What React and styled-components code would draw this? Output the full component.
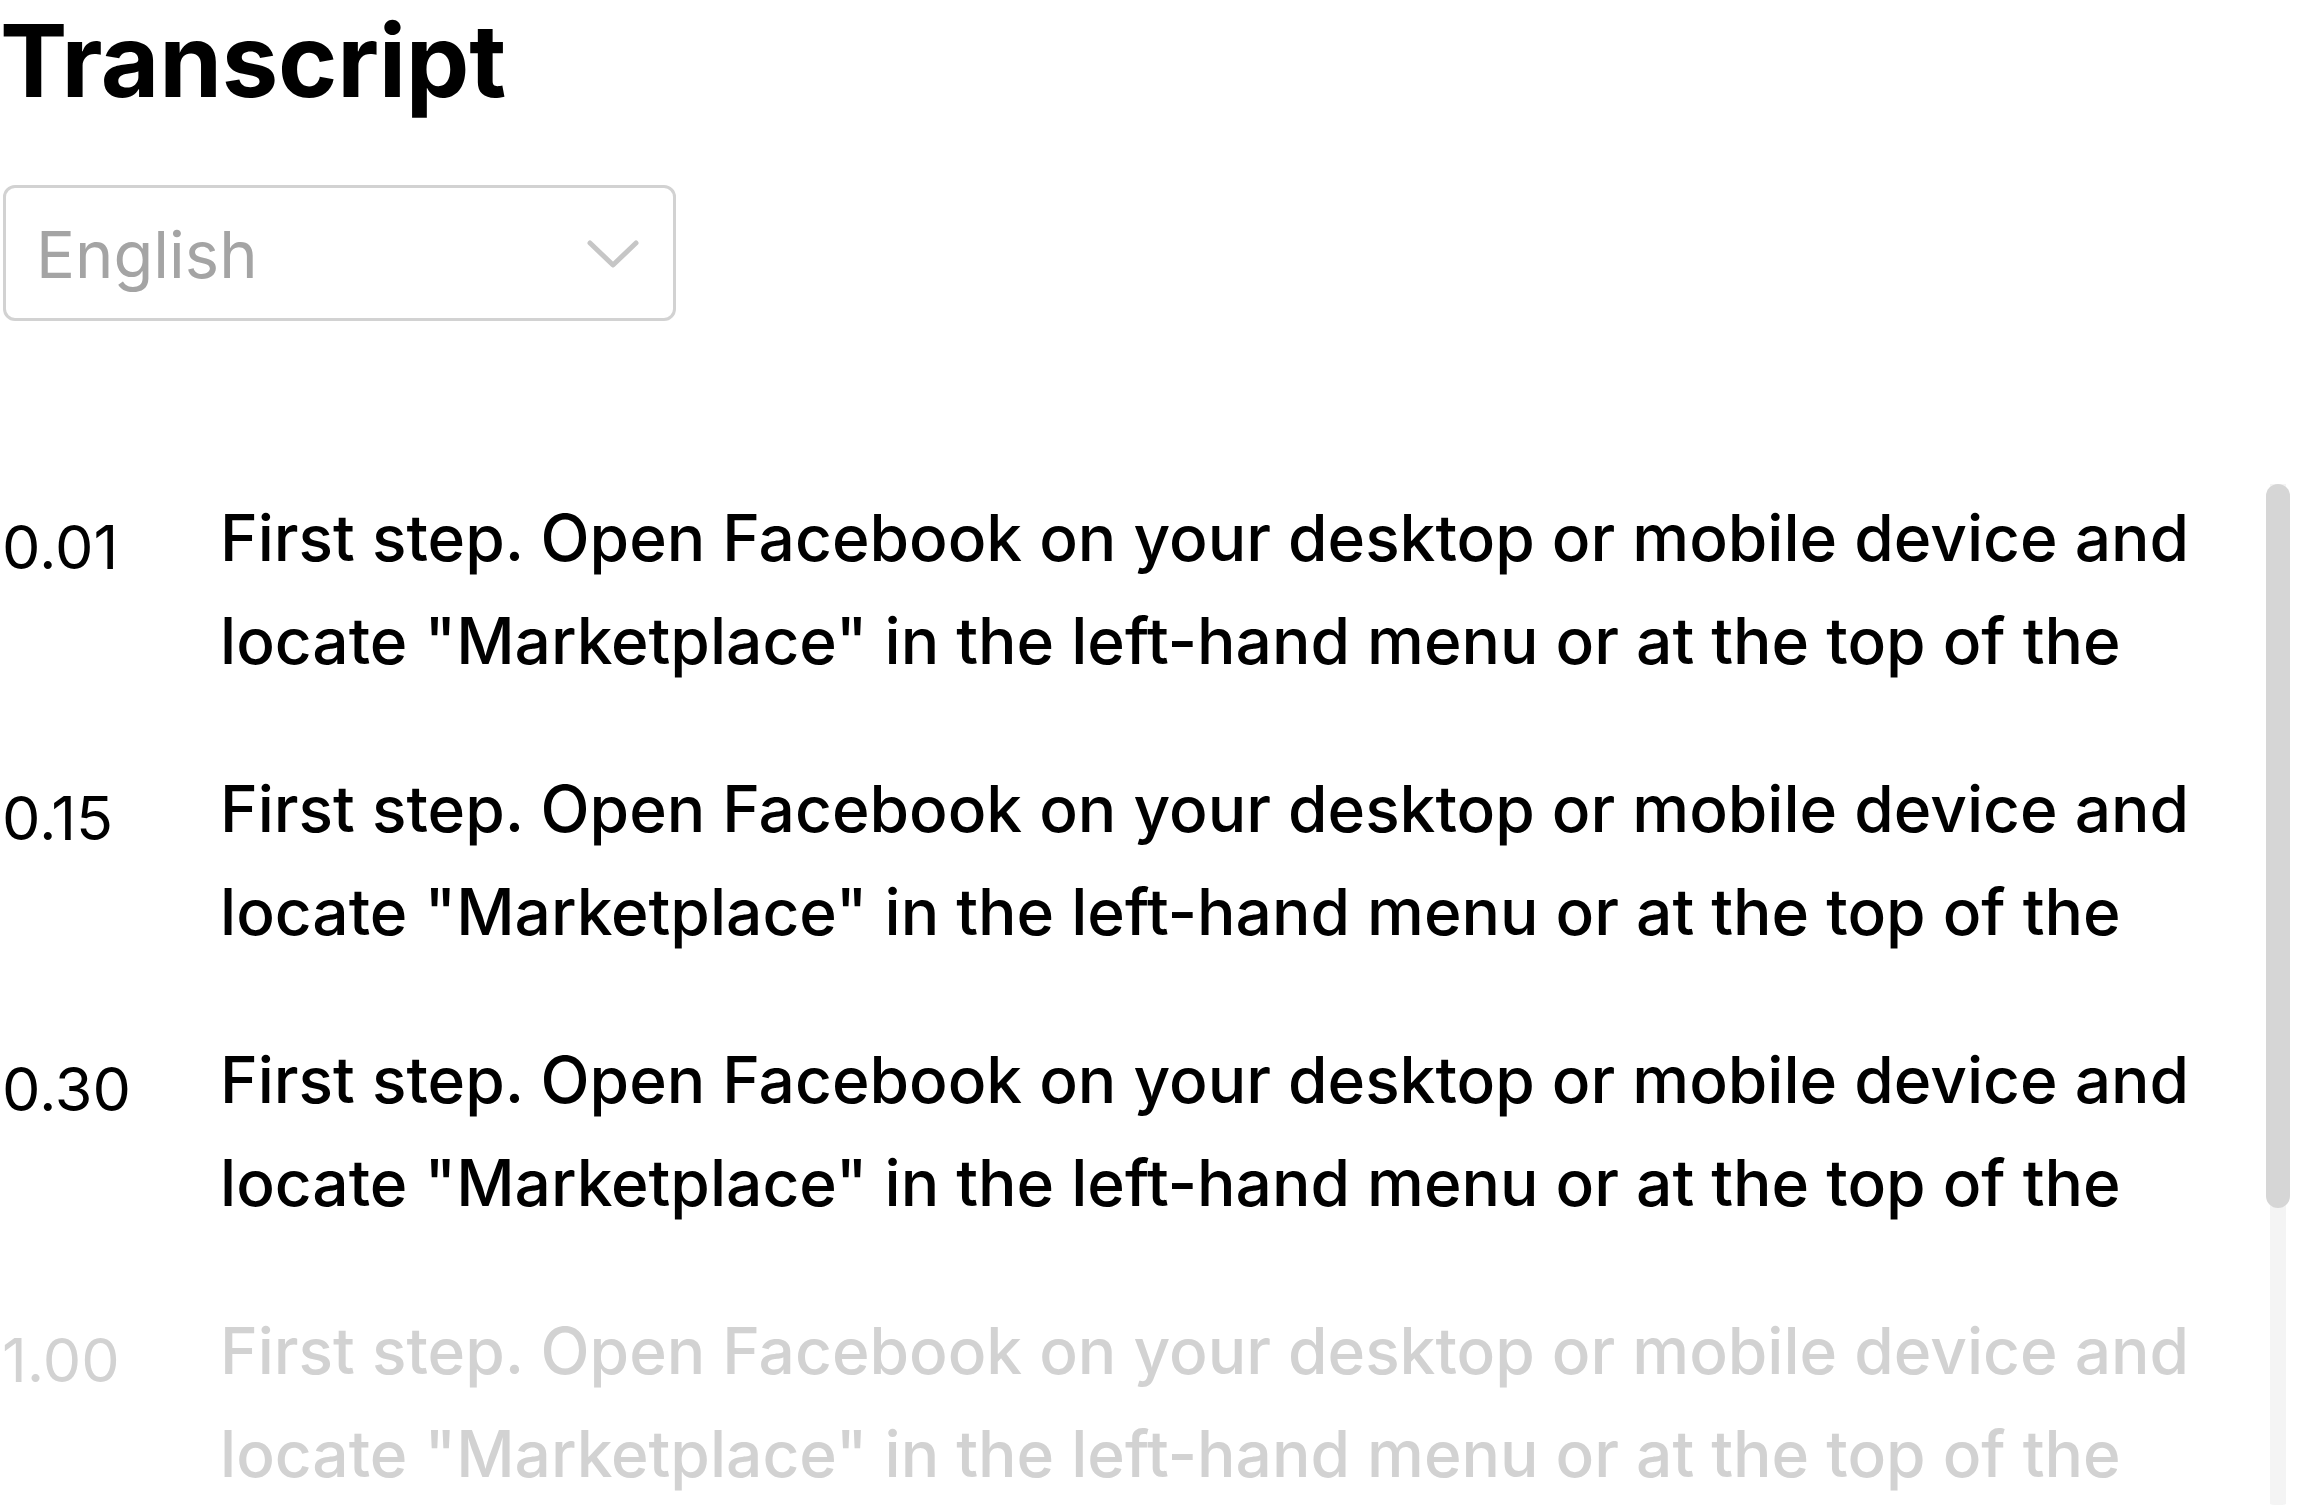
import React from 'react';
import styled, { createGlobalStyle } from 'styled-components';

const GlobalStyle = createGlobalStyle`
    html, body {
        margin: 0;
        padding: 0;
        background: #ffffff;
        font-family: Inter, "Noto Sans", sans-serif;
    }
`

const rows = [
    { time: '0.01', text: 'First step. Open Facebook on your desktop or mobile device and locate "Marketplace" in the left-hand menu or at the top of the' },
    { time: '0.15', text: 'First step. Open Facebook on your desktop or mobile device and locate "Marketplace" in the left-hand menu or at the top of the' },
    { time: '0.30', text: 'First step. Open Facebook on your desktop or mobile device and locate "Marketplace" in the left-hand menu or at the top of the' },
    { time: '1.00', text: 'First step. Open Facebook on your desktop or mobile device and locate "Marketplace" in the left-hand menu or at the top of the', upcoming: true },
    { time: '1.15', text: 'First step. Open Facebook on your desktop or mobile device and locate "Marketplace" in the left-hand menu or at the top of the', upcoming: true },
]

const Chevron = () => (
    <svg width="52" height="28" viewBox="0 0 52 28" fill="none">
        <polyline points="3,3 26,25 49,3" stroke="#c6c6c6" strokeWidth="5" strokeLinecap="round" strokeLinejoin="round" />
    </svg>
)

const App = () => {
    return (
        <Page>
            <GlobalStyle />
            <Title>Transcript</Title>
            <Select>
                <SelectValue>English</SelectValue>
                <Chevron />
            </Select>
            <ScrollArea>
                <List>
                    {rows.map((row, i) => (
                        <Row key={i} $upcoming={row.upcoming}>
                            <Time>{row.time}</Time>
                            <Line>{row.text}</Line>
                        </Row>
                    ))}
                </List>
                <Track>
                    <Thumb />
                </Track>
            </ScrollArea>
        </Page>
    );
};

export default App;

const Page = styled.main`
    width: 100%;
    height: 100vh;
    box-sizing: border-box;
    padding: 0 11px 3px 0;
    display: flex;
    flex-direction: column;
    overflow: hidden;
`

const Title = styled.h1`
    margin: 0;
    font-family: Inter, sans-serif;
    font-size: 101px;
    font-weight: 700;
    line-height: 1.2;
    letter-spacing: -0.3px;
    color: #000000;
`

const Select = styled.div`
    margin-top: 64px;
    margin-left: 3px;
    width: 673px;
    height: 136px;
    box-sizing: border-box;
    border: 3px solid #d2d2d2;
    border-radius: 12px;
    display: flex;
    align-items: center;
    justify-content: space-between;
    padding: 2px 34px 0 30px;
`

const SelectValue = styled.span`
    font-family: Inter, sans-serif;
    font-size: 65px;
    font-weight: 400;
    color: #a4a4a4;
`

const ScrollArea = styled.div`
    margin-top: 163px;
    flex: 1;
    min-height: 0;
    display: flex;
    align-items: stretch;
`

const List = styled.section`
    flex: 1;
    overflow: hidden;
    display: flex;
    flex-direction: column;
    gap: 65px;
    padding-top: 2px;
`

const Track = styled.div`
    width: 24px;
    flex-shrink: 0;
    display: flex;
    flex-direction: column;
    align-items: center;
    background: linear-gradient(to right, transparent 4px, #f4f4f4 4px, #f4f4f4 20px, transparent 20px);
    border-radius: 0 0 8px 8px;
`

const Thumb = styled.div`
    width: 24px;
    height: 724px;
    background: #d6d6d6;
    border-radius: 12px;
`

const Row = styled.div`
    display: flex;
    align-items: flex-start;
    flex-shrink: 0;
    color: ${props => props.$upcoming ? '#d2d2d2' : '#000000'};
`

const Time = styled.span`
    width: 220px;
    flex-shrink: 0;
    margin-top: 10px;
    font-size: 61px;
    font-weight: 400;
    line-height: 103px;
    padding-left: 2px;
    box-sizing: border-box;
`

const Line = styled.p`
    margin: 0;
    flex: 1;
    font-size: 64px;
    font-weight: 500;
    line-height: 103px;
`
